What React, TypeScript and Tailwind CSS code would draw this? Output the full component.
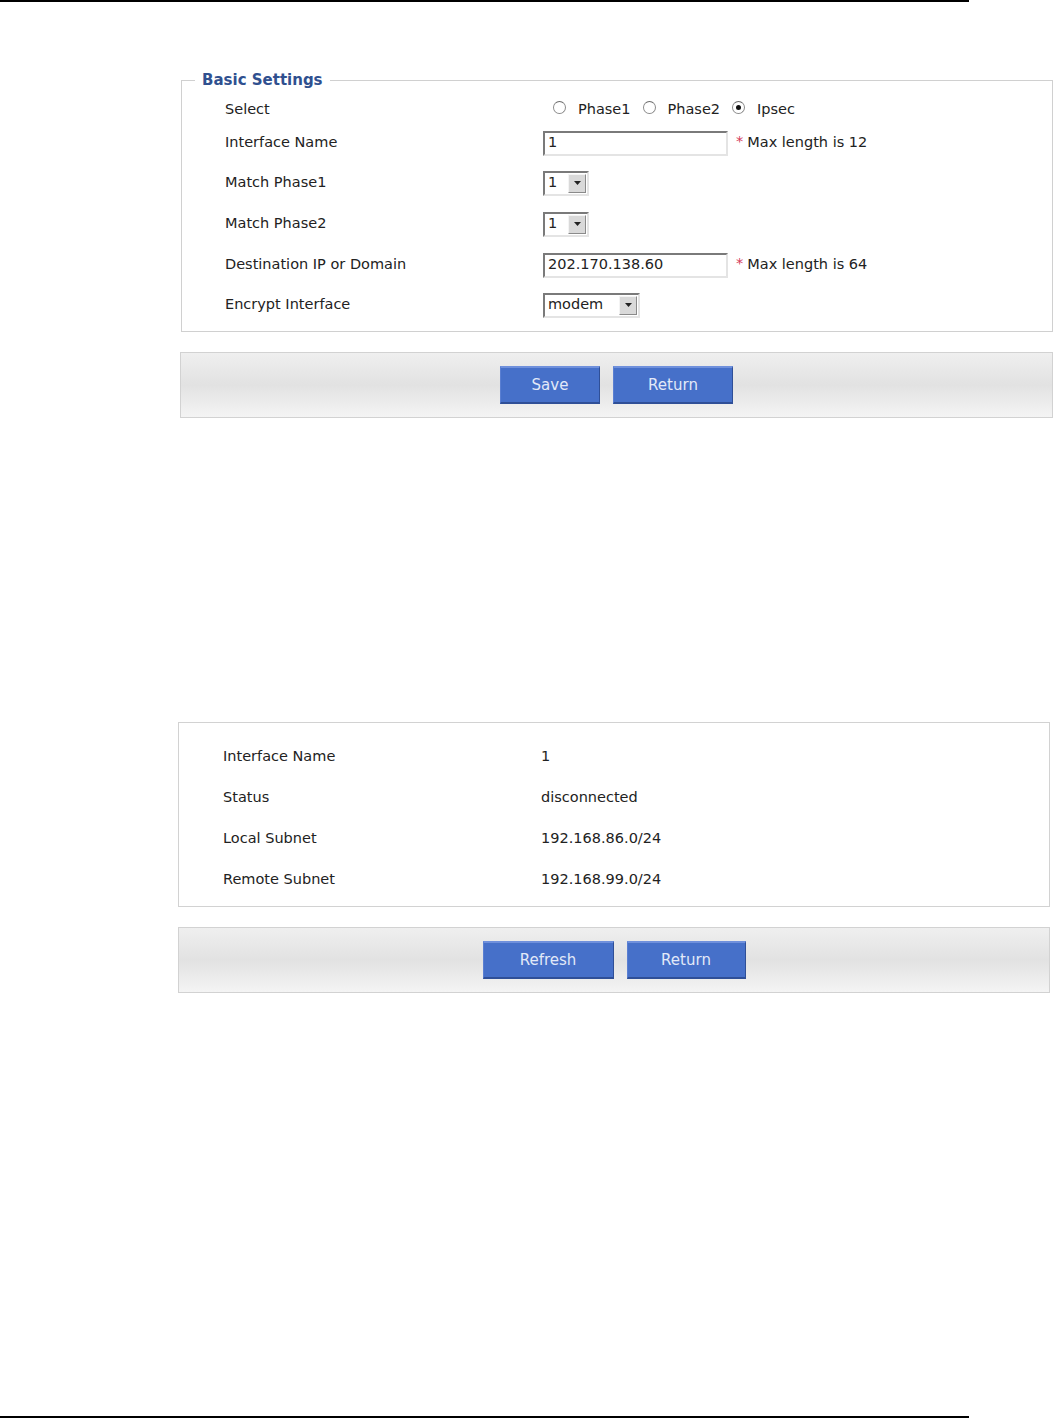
import React from "react";

const Radio = ({ checked }: { checked?: boolean }) => (
  <span className="inline-flex items-center justify-center w-[13px] h-[13px] rounded-full border border-[#8a8a8a] border-t-[#6a6a6a] bg-white -mt-[5px]">
    {checked && <span className="w-[5px] h-[5px] rounded-full bg-[#111]" />}
  </span>
);

const TextBox = ({ value, w }: { value: string; w: string }) => (
  <div
    className={`${w} h-[25px] flex items-center pl-[3px] border-2 border-t-[#7a7a7a] border-l-[#7a7a7a] border-b-[#e4e4e4] border-r-[#e4e4e4] bg-white`}
  >
    {value}
  </div>
);

const Select = ({ value, w }: { value: string; w: string }) => (
  <div
    className={`${w} h-[25px] flex items-center justify-between border-2 border-t-[#7a7a7a] border-l-[#7a7a7a] border-b-[#e4e4e4] border-r-[#e4e4e4] bg-white`}
  >
    <span className="pl-[3px]">{value}</span>
    <span className="w-[18px] h-[19px] mr-[1px] flex items-center justify-center bg-[#d9d9d9] border border-t-[#f4f4f4] border-l-[#f4f4f4] border-b-[#8a8a8a] border-r-[#8a8a8a]">
      <svg width="7" height="4" viewBox="0 0 7 4">
        <path d="M0 0 L7 0 L3.5 4 Z" fill="#222" />
      </svg>
    </span>
  </div>
);

const Req = ({ text }: { text: string }) => (
  <span className="ml-[8px] flex items-center">
    <span className="text-[#d33a5a] mr-[4px] -mt-[3px]">*</span>
    {text}
  </span>
);

const Btn = ({ label, w }: { label: string; w: string }) => (
  <button
    className={`${w} h-[38px] bg-[#4670c9] text-[#e2e9f8] text-[15px] border-t-2 border-t-[#6f90dc] border-b-2 border-b-[#2f4f97] border-r border-r-[#2f4f97] border-l border-l-[#5a7fd2]`}
  >
    {label}
  </button>
);

const ButtonBar = ({ children, cls }: { children: React.ReactNode; cls: string }) => (
  <div
    className={`${cls} h-[66px] flex items-center justify-center gap-[13px] border border-[#d2d2d2] bg-linear-to-b from-[#efefef] via-[#e2e2e2] to-[#f4f4f4]`}
  >
    {children}
  </div>
);

export default function App() {
  const status = [
    ["Interface Name", "1"],
    ["Status", "disconnected"],
    ["Local Subnet", "192.168.86.0/24"],
    ["Remote Subnet", "192.168.99.0/24"],
  ];

  return (
    <div className="w-[1061px] h-[1419px] bg-white flex flex-col font-['DejaVu_Sans',sans-serif] text-[14.5px] text-[#222]">
      <div className="w-[969px] h-[2px] bg-black" />

      <fieldset className="ml-[181px] mt-[68px] w-[872px] border border-[#d0d0d0] pb-[13px]">
        <legend className="ml-[13px] px-[7px] h-[20px] leading-[20px] font-bold text-[15px] text-[#30508f]">
          Basic Settings
        </legend>
        <div className="flex flex-col pl-[43px]">
          <div className="h-[26px] mt-[7px] flex items-center">
            <span className="w-[318px]">Select</span>
            <span className="ml-[10px] flex items-center gap-[12px]">
              <Radio />
              <span>Phase1</span>
              <Radio />
              <span>Phase2</span>
              <Radio checked />
              <span>Ipsec</span>
            </span>
          </div>
          <div className="h-[26px] mt-[7px] flex items-center">
            <span className="w-[318px]">Interface Name</span>
            <TextBox value="1" w="w-[185px]" />
            <Req text="Max length is 12" />
          </div>
          <div className="h-[26px] mt-[14px] flex items-center">
            <span className="w-[318px]">Match Phase1</span>
            <Select value="1" w="w-[46px]" />
          </div>
          <div className="h-[26px] mt-[15px] flex items-center">
            <span className="w-[318px]">Match Phase2</span>
            <Select value="1" w="w-[46px]" />
          </div>
          <div className="h-[26px] mt-[15px] flex items-center">
            <span className="w-[318px]">Destination IP or Domain</span>
            <TextBox value="202.170.138.60" w="w-[185px]" />
            <Req text="Max length is 64" />
          </div>
          <div className="h-[26px] mt-[14px] flex items-center">
            <span className="w-[318px]">Encrypt Interface</span>
            <Select value="modem" w="w-[97px]" />
          </div>
        </div>
      </fieldset>

      <ButtonBar cls="ml-[180px] mt-[20px] w-[873px] h-[65px]">
        <Btn label="Save" w="w-[100px]" />
        <Btn label="Return" w="w-[120px]" />
      </ButtonBar>

      <div className="ml-[178px] mt-[304px] w-[872px] h-[185px] border border-[#d2d2d2] pt-[13px] pl-[44px]">
        {status.map(([k, v]) => (
          <div key={k} className="h-[41px] flex items-center">
            <span className="w-[318px]">{k}</span>
            <span>{v}</span>
          </div>
        ))}
      </div>

      <ButtonBar cls="ml-[178px] mt-[20px] w-[872px]">
        <Btn label="Refresh" w="w-[131px]" />
        <Btn label="Return" w="w-[119px]" />
      </ButtonBar>

      <div className="mt-auto mb-[1px] w-[969px] h-[2px] bg-black" />
    </div>
  );
}
